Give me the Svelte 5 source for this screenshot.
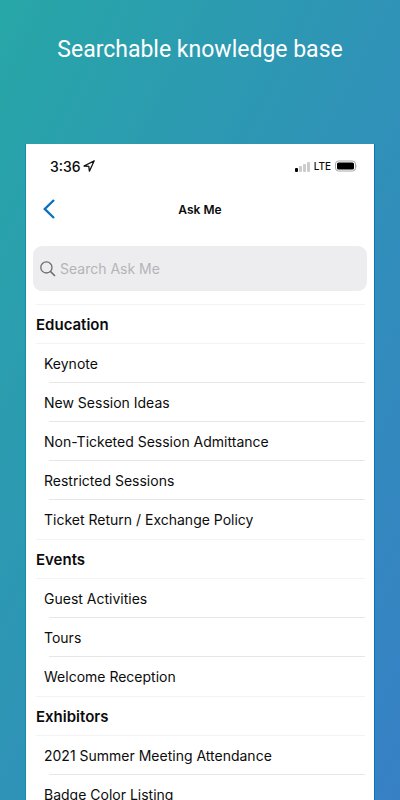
<script>
  const sections = [
    {
      title: 'Education',
      items: [
        'Keynote',
        'New Session Ideas',
        'Non-Ticketed Session Admittance',
        'Restricted Sessions',
        'Ticket Return / Exchange Policy'
      ]
    },
    { title: 'Events', items: ['Guest Activities', 'Tours', 'Welcome Reception'] },
    { title: 'Exhibitors', items: ['2021 Summer Meeting Attendance', 'Badge Color Listing'] }
  ];

  let query = '';

  $: visible = sections
    .map((s) => ({
      ...s,
      items: s.items.filter((i) => i.toLowerCase().includes(query.trim().toLowerCase()))
    }))
    .filter((s) => s.items.length > 0);
</script>

<div class="page">
  <h1>Searchable knowledge base</h1>

  <main class="screen">
    <div class="status-bar">
      <div class="status-group">
        <span class="time">3:36</span>
        <svg width="12" height="12" viewBox="0 0 12 12" aria-hidden="true">
          <path d="M11.2 0.8 L1 6 L5.8 6.4 L6.4 11.2 Z" fill="none" stroke="#111" stroke-width="1.3" stroke-linejoin="round" />
        </svg>
      </div>
      <div class="status-group right">
        <svg width="15" height="11" viewBox="0 0 15 11" aria-hidden="true">
          <rect x="0" y="7" width="3" height="4" rx="1" fill="#000" />
          <rect x="4" y="5" width="3" height="6" rx="1" fill="#ccc" />
          <rect x="8" y="3" width="3" height="8" rx="1" fill="#ccc" />
          <rect x="12" y="1" width="3" height="10" rx="1" fill="#ccc" />
        </svg>
        <span class="network">LTE</span>
        <svg width="23" height="12" viewBox="0 0 23 12" aria-hidden="true">
          <rect x="0.5" y="1" width="20" height="10" rx="3" fill="none" stroke="#a8a8a8" />
          <rect x="2" y="2.4" width="17" height="7.2" rx="1.6" fill="#000" />
          <path d="M21.5 4.3 Q22.8 6 21.5 7.7 Z" fill="#a8a8a8" />
        </svg>
      </div>
    </div>

    <header class="nav-bar">
      <button class="back" aria-label="Back">
        <svg width="12" height="20" viewBox="0 0 12 20" aria-hidden="true">
          <path d="M11 1 L1.8 10 L11 19" fill="none" stroke="#0a70c0" stroke-width="2.4" />
        </svg>
      </button>
      <h2>Ask Me</h2>
    </header>

    <label class="search">
      <svg width="16" height="16" viewBox="0 0 16 16" aria-hidden="true">
        <circle cx="6.4" cy="6.4" r="5.6" fill="none" stroke="#6c6c70" stroke-width="1.3" />
        <path d="M10.4 10.4 L15 15" stroke="#6c6c70" stroke-width="1.5" />
      </svg>
      <input type="search" placeholder="Search Ask Me" aria-label="Search Ask Me" bind:value={query} />
    </label>

    {#each visible as section}
      <section>
        <h3>{section.title}</h3>
        <ul>
          {#each section.items as item}
            <li><a href="#topic">{item}</a></li>
          {/each}
        </ul>
      </section>
    {/each}
  </main>
</div>

<style>
  :global(body) {
    margin: 0;
    font-family: Inter, 'Liberation Sans', sans-serif;
    color: #0c0c0c;
  }
  .page {
    box-sizing: border-box;
    display: flex;
    flex-direction: column;
    height: 100vh;
    padding: 0 26px;
    overflow: hidden;
    background: linear-gradient(to bottom right, #27a7a7, #2f93b7 50%, #3780c5);
  }
  h1 {
    margin: 35px 0 79px;
    color: #fff;
    font: 400 23px/30px Roboto, sans-serif;
    text-align: center;
    white-space: nowrap;
  }
  .screen {
    flex: 1 0 auto;
    background: #fff;
    box-shadow: -1px 0 #128fa6, 1px 0 #0877b8;
  }

  /* Status bar */
  .status-bar {
    display: flex;
    align-items: center;
    justify-content: space-between;
    height: 44px;
    padding: 0 16px 0 24px;
  }
  .status-group { display: flex; align-items: center; gap: 2px; }
  .status-group.right { gap: 4px; }
  .time { font-size: 14px; font-weight: 500; }
  .network { font-size: 10px; font-weight: 500; }

  /* Title row */
  .nav-bar {
    display: grid;
    grid-template-columns: 40px 1fr 40px;
    align-items: center;
    height: 42px;
  }
  .back {
    display: flex;
    justify-content: flex-end;
    padding: 0 11px 0 0;
    border: none;
    background: none;
    cursor: pointer;
  }
  h2 {
    margin: 0;
    font-size: 12px;
    font-weight: 600;
    text-align: center;
  }

  /* Search */
  .search {
    display: flex;
    align-items: center;
    gap: 4px;
    height: 45px;
    margin: 16px 7px 13px;
    padding: 0 7px;
    border-radius: 9px;
    background: #ededef;
  }
  .search input {
    flex: 1;
    min-width: 0;
    padding: 0;
    border: none;
    outline: none;
    background: none;
    color: inherit;
    font: 400 14px/20px Inter, 'Liberation Sans', sans-serif;
  }
  .search input::placeholder { color: #b4b4b8; }

  /* Topics */
  section { padding: 0 9px 0 10px; }
  h3 {
    box-sizing: border-box;
    height: 40px;
    margin: 0;
    border-top: 1px solid #f3f3f3;
    border-bottom: 1px solid #f3f3f3;
    font-size: 15px;
    font-weight: 600;
    line-height: 40px;
  }
  ul { margin: 0; padding: 0 0 0 13px; list-style: none; }
  li { height: 38px; border-bottom: 1px solid #e6e6e6; }
  li:last-child { border-bottom-color: transparent; }
  li a {
    display: block;
    margin-left: -5px;
    color: inherit;
    font-size: 14px;
    line-height: 40px;
    text-decoration: none;
    white-space: nowrap;
  }
</style>
